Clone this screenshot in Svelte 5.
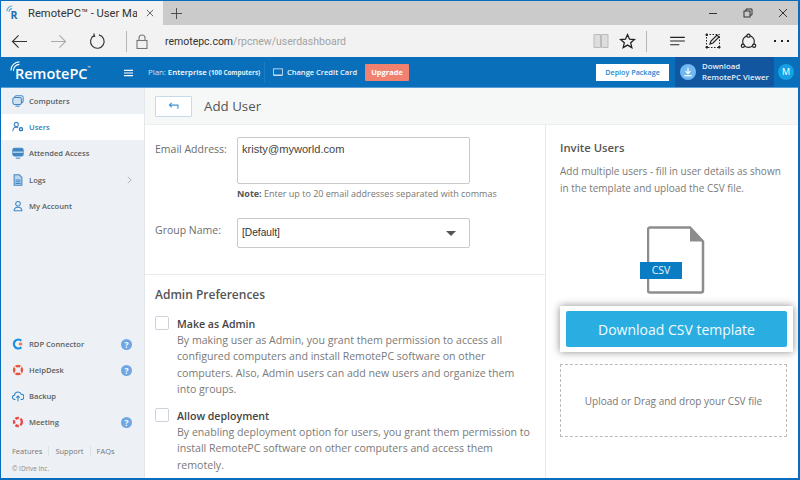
<script>
	const topNav = [
		{ label: 'Computers', icon: 'computers', tint: true },
		{ label: 'Users', icon: 'users', active: true },
		{ label: 'Attended Access', icon: 'attended' },
		{ label: 'Logs', icon: 'logs', more: true },
		{ label: 'My Account', icon: 'account' }
	];
	const bottomNav = [
		{ label: 'RDP Connector', icon: 'rdp', help: true },
		{ label: 'HelpDesk', icon: 'helpdesk', help: true },
		{ label: 'Backup', icon: 'backup' },
		{ label: 'Meeting', icon: 'meeting', help: true }
	];
	const footerLinks = ['Features', 'Support', 'FAQs'];
	const prefs = [
		{
			title: 'Make as Admin',
			text: 'By making user as Admin, you grant them permission to access all configured computers and install RemotePC software on other computers. Also, Admin users can add new users and organize them into groups.'
		},
		{
			title: 'Allow deployment',
			text: 'By enabling deployment option for users, you grant them permission to install RemotePC software on other computers and access them remotely.'
		}
	];
</script>

{#snippet navIcon(name)}
	<svg class="nav-icon" viewBox="0 0 14 14" fill="none" stroke="#3d86c6" stroke-width="1.2">
		{#if name === 'computers'}
			<rect x="3" y="1" width="10" height="8" rx="2" />
			<rect x="1" y="3" width="10" height="8" rx="2" fill="#cfe2f2" />
			<path d="M4 13h5" />
		{:else if name === 'users'}
			<circle cx="5" cy="4" r="2.4" />
			<path d="M1 12c0-3 2-4.6 4-4.6 1 0 1.600.2 2.200.7" />
			<circle cx="10.500" cy="9.500" r="1.800" stroke="#1f6fb5" stroke-width="1.500" />
		{:else if name === 'attended'}
			<rect x="1" y="1.500" width="12" height="9" rx="2" fill="#3d86c6" />
			<path d="M1 6h12" stroke="#edf1f5" />
			<path d="M4.500 13h5" />
		{:else if name === 'logs'}
			<path d="M2.500 1h6l3 3v9h-9z" fill="#bcd6ec" />
			<path d="M4 7h6M4 9h6M4 11h6" stroke="#3d86c6" />
		{:else if name === 'account'}
			<circle cx="7" cy="4.500" r="2.700" />
			<path d="M2.500 12.500c0-3 1.500-4 4.500-4s4.500 1 4.500 4z" />
		{:else if name === 'rdp'}
			<path d="M11 3.200A5.200 5.200 0 1 0 11 10.800" stroke="#1c8fe0" stroke-width="2.600" />
			<path d="M8 5.500h4v3H8z" fill="#ee7b4a" stroke="none" />
		{:else if name === 'helpdesk'}
			<circle cx="7" cy="7" r="4.600" stroke="#e8533f" stroke-width="2.800" />
			<path d="M3 3l2.500 2.500M11 3L8.500 5.500M3 11l2.500-2.500M11 11L8.500 8.500" stroke="#edf1f5" stroke-width="1.800" />
		{:else if name === 'backup'}
			<path d="M4 11H3.200a2.500 2.500 0 0 1-.3-5A4 4 0 0 1 10.700 5a3 3 0 0 1 .3 6h-1" stroke="#2a80c4" />
			<path d="M7 13V7M5 9l2-2 2 2" stroke="#2a80c4" />
		{:else if name === 'meeting'}
			<circle cx="7" cy="7" r="4.600" stroke="#ea4b4b" stroke-width="2.800" stroke-dasharray="4.200 1.800" />
		{/if}
	</svg>
{/snippet}

<div class="window">
	<div class="tabstrip">
		<div class="tab">
			<svg class="favicon" viewBox="0 0 16 18" fill="none">
				<path d="M1 7a6 6 0 0 1 6-6M3.500 7.500a3.500 3.500 0 0 1 3.500-3.500" stroke="#4aa8dc" stroke-width="1.300" />
				<text x="5" y="16" class="favicon-r">R</text>
			</svg>
			<span class="tab-title">RemotePC™ - User Man</span>
			<svg class="tab-x" viewBox="0 0 10 10" stroke="#444" stroke-width="1"><path d="M1 1l8 8M9 1l-8 8" /></svg>
		</div>
		<svg class="tab-plus" viewBox="0 0 12 12" stroke="#444" stroke-width="1"><path d="M6 0v12M0 6h12" /></svg>
		<div class="window-btns">
			<svg viewBox="0 0 10 10" stroke="#333" stroke-width="1" fill="none"><path d="M1 5.500h8" /></svg>
			<svg viewBox="0 0 10 10" stroke="#333" stroke-width="1" fill="none"><rect x="1" y="3" width="6" height="6" /><path d="M3 3V1h6v6H7" /></svg>
			<svg viewBox="0 0 10 10" stroke="#333" stroke-width="1" fill="none"><path d="M1 1l8 8M9 1l-8 8" /></svg>
		</div>
	</div>

	<div class="toolbar">
		<svg class="tb-nav" viewBox="0 0 18 16" fill="none" stroke="#333" stroke-width="1.200"><path d="M17 8H1.500M8 1.500L1.500 8 8 14.500" /></svg>
		<svg class="tb-nav fwd" viewBox="0 0 18 16" fill="none" stroke="#aaa" stroke-width="1.200"><path d="M1 8h15.500M10 1.500L16.500 8 10 14.500" /></svg>
		<svg class="tb-reload" viewBox="0 0 18 18" fill="none" stroke="#333" stroke-width="1.200"><path d="M5.500 2.600a7.200 7.200 0 1 0 5-.6" /><path d="M5 0.500l1 3-3 .5" /></svg>
		<i class="tb-sep"></i>
		<svg class="tb-lock" viewBox="0 0 12 15" fill="none" stroke="#777" stroke-width="1.100"><rect x="1" y="6.500" width="10" height="8" /><path d="M3 6.500V4a3 3 0 0 1 6 0v2.500" /></svg>
		<div class="url">remotepc.com<span>/rpcnew/userdashboard</span></div>
		<svg class="tb-book" viewBox="0 0 16 16" fill="#ddd" stroke="#bbb" stroke-width="1"><path d="M1 1.500h6.500v13H1zM8.500 1.500H15v13H8.500z" /></svg>
		<svg class="tb-star" viewBox="0 0 16 16" fill="none" stroke="#222" stroke-width="1.200"><path d="M8 1.500l1.900 4.300 4.600.4-3.500 3 1.100 4.600L8 11.400l-4.100 2.400L5 9.200 1.500 6.200l4.600-.4z" /></svg>
		<i class="tb-sep two"></i>
		<svg class="tb-hub" viewBox="0 0 18 12" stroke="#222" stroke-width="1.200"><path d="M1 1.500h16M1 5.500h16M1 9.500h10" /></svg>
		<svg class="tb-note" viewBox="0 0 16 16" fill="none" stroke="#222"><rect x="1.500" y="1.500" width="13" height="13" stroke-dasharray="1.500 1.500" /><path d="M5 11l1-3 6-6 2 2-6 6z" stroke-width="1.200" /><path d="M1 1h1.500v1.500H1zM13.500 13.500H15V15h-1.500zM1 13.500h1.500V15H1z" fill="#222" /></svg>
		<svg class="tb-share" viewBox="0 0 16 16" fill="none" stroke="#222" stroke-width="1.100"><circle cx="8" cy="8" r="5.500" /><circle cx="8" cy="2.500" r="1.500" fill="#f2f2f2" /><circle cx="2.700" cy="12" r="1.500" fill="#f2f2f2" /><circle cx="13.300" cy="12" r="1.500" fill="#f2f2f2" /></svg>
		<div class="tb-dots"><i></i><i></i><i></i></div>
	</div>

	<header class="appbar">
		<div class="logo">
			<svg class="logo-arcs" viewBox="0 0 14 14" fill="none" stroke="#fff" stroke-width="1.300"><path d="M1 11a10 10 0 0 1 10-10M4 11.500a7 7 0 0 1 7-7.500" /></svg>
			RemotePC<sup>™</sup>
		</div>
		<svg class="burger" viewBox="0 0 10 8" stroke="#fff" stroke-width="1.300"><path d="M0 1h10M0 4h10M0 7h10" /></svg>
		<div class="plan">Plan: <b>Enterprise</b> <small>(100 Computers)</small></div>
		<div class="card-link">
			<svg viewBox="0 0 11 9" fill="none" stroke="#d3e6f5" stroke-width="0.900"><rect x="0.500" y="0.500" width="10" height="7" /><path d="M1 7.500h9" stroke-width="1.300" /></svg>
			Change Credit Card
		</div>
		<button class="upgrade">Upgrade</button>
		<button class="deploy">Deploy Package</button>
		<div class="viewer">
			<span class="dl-circle">
				<svg viewBox="0 0 12 12" fill="none" stroke="#fff" stroke-width="1.500"><path d="M6 1v6.500M3 5l3 3 3-3" /><path d="M1.500 10.500h9" /></svg>
			</span>
			<div class="viewer-text">Download<br />RemotePC Viewer</div>
		</div>
		<div class="avatar-wrap"><span class="avatar">M</span></div>
	</header>

	<div class="body">
		<aside class="sidebar">
			<nav>
				{#each topNav as item}
					<div class="nav-item" class:active={item.active} class:tint={item.tint}>
						{@render navIcon(item.icon)}
						<span>{item.label}</span>
						{#if item.more}
							<svg class="chev" viewBox="0 0 6 10" fill="none" stroke="#9aa4ad" stroke-width="1"><path d="M1 1l4 4-4 4" /></svg>
						{/if}
					</div>
				{/each}
			</nav>
			<div class="side-bottom">
				{#each bottomNav as item}
					<div class="nav-item low">
						{@render navIcon(item.icon)}
						<span>{item.label}</span>
						{#if item.help}<em class="help">?</em>{/if}
					</div>
				{/each}
				<div class="links">
					{#each footerLinks as link}<span>{link}</span>{/each}
				</div>
				<div class="copy">© IDrive Inc.</div>
			</div>
		</aside>

		<main class="content">
			<div class="title-row">
				<button class="back" aria-label="Back">
					<svg viewBox="0 0 12 9" fill="none" stroke="#3f95d6" stroke-width="1.300"><path d="M11 7.500V3.500H1.500M4 1L1.500 3.500 4 6" /></svg>
				</button>
				<h1>Add User</h1>
			</div>
			<div class="panels">
				<section class="form-panel">
					<div class="form-top">
						<div class="field">
							<span class="label">Email Address:</span>
							<div>
								<div class="textarea">kristy@myworld.com</div>
								<p class="note"><b>Note:</b> Enter up to 20 email addresses separated with commas</p>
							</div>
						</div>
						<div class="field group">
							<span class="label">Group Name:</span>
							<div class="select">[Default]<i class="caret"></i></div>
						</div>
					</div>
					<div class="prefs">
						<h2>Admin Preferences</h2>
						{#each prefs as pref}
							<div class="pref">
								<i class="check"></i>
								<div>
									<h3>{pref.title}</h3>
									<p>{pref.text}</p>
								</div>
							</div>
						{/each}
					</div>
				</section>

				<section class="invite">
					<h2>Invite Users</h2>
					<p>Add multiple users - fill in user details as shown in the template and upload the CSV file.</p>
					<div class="csv-wrap">
						<svg class="csv-file" viewBox="0 0 58 68" fill="none" stroke="#8d8d8d" stroke-width="2.500">
							<path d="M3 1.500h40l13 14v49a2 2 0 0 1-2 2H3a2 2 0 0 1-2-2V3.500a2 2 0 0 1 2-2z" />
							<path d="M43 1.500l13 14H43z" fill="#8d8d8d" stroke="none" />
						</svg>
						<span class="csv-badge">CSV</span>
					</div>
					<div class="highlight">
						<button class="csv-btn">Download CSV template</button>
					</div>
					<div class="dropzone">Upload or Drag and drop your CSV file</div>
				</section>
			</div>
		</main>
	</div>
</div>

<style>
	:global(body) {
		margin: 0;
		background: #fff;
	}

	.window {
		box-sizing: border-box;
		width: 800px;
		height: 480px;
		overflow: hidden;
		border: solid #0a6cbd;
		border-width: 1px 2px 2px 1px;
		display: flex;
		flex-direction: column;
		font-family: 'Open Sans', sans-serif;
		color: #555;
	}

	.tabstrip {
		height: 24px;
		flex: none;
		display: flex;
		align-items: center;
		background: #cbcbcb;
	}

	.tab {
		width: 162px;
		height: 100%;
		flex: none;
		background: #f2f2f2;
		display: flex;
		align-items: center;
		position: relative;
	}

	.favicon {
		width: 14px;
		height: 16px;
		margin-left: 5px;
	}

	.favicon-r {
		font: bold 12px 'Open Sans', sans-serif;
		fill: #1f6fb5;
	}

	.tab-title {
		margin-left: 8px;
		width: 109px;
		overflow: hidden;
		white-space: nowrap;
		font-size: 11.200px;
		color: #333;
		font-family: Roboto, sans-serif;
	}

	.tab-x {
		width: 8px;
		height: 8px;
		margin-left: 9px;
	}

	.tab-plus {
		width: 11px;
		height: 11px;
		margin-left: 8px;
	}

	.window-btns {
		margin-left: auto;
		display: flex;
		gap: 25px;
		margin-right: 10px;
	}

	.window-btns svg {
		width: 10px;
		height: 10px;
	}

	.toolbar {
		height: 32px;
		flex: none;
		display: flex;
		align-items: center;
		background: #f2f2f2;
	}

	.tb-nav {
		width: 17px;
		height: 15px;
		margin-left: 10px;
	}

	.tb-nav.fwd {
		margin-left: 22px;
	}

	.tb-reload {
		width: 17px;
		height: 17px;
		margin-left: 22px;
	}

	.tb-sep {
		width: 1px;
		height: 21px;
		background: #b5b5b5;
		margin-left: 20px;
	}

	.tb-lock {
		width: 12px;
		height: 15px;
		margin-left: 9px;
	}

	.url {
		flex: 1;
		margin-left: 17px;
		font-size: 10.500px;
		color: #333;
		font-family: Roboto, sans-serif;
		white-space: nowrap;
	}

	.url span {
		color: #a2a2a2;
	}

	.tb-book {
		width: 16px;
		height: 16px;
	}

	.tb-star {
		width: 17px;
		height: 17px;
		margin-left: 10px;
	}

	.tb-sep.two {
		margin-left: 10px;
	}

	.tb-hub {
		width: 17px;
		height: 11px;
		margin-left: 22px;
	}

	.tb-note {
		width: 16px;
		height: 16px;
		margin-left: 19px;
	}

	.tb-share {
		width: 17px;
		height: 17px;
		margin-left: 19px;
	}

	.tb-dots {
		display: flex;
		gap: 4.500px;
		margin: 0 9px 0 17px;
	}

	.tb-dots i {
		width: 2px;
		height: 2px;
		background: #222;
	}

	.appbar {
		height: 31px;
		flex: none;
		display: flex;
		align-items: center;
		background: #0a6fbb;
		border-bottom: 1px solid #5a9fd6;
		box-sizing: border-box;
		color: #fff;
	}

	.logo {
		position: relative;
		width: 100px;
		margin-left: 14px;
		margin-right: 1px;
		padding-top: 2px;
		font-size: 14.500px;
		font-weight: 600;
		white-space: nowrap;
		box-sizing: border-box;
	}

	.logo sup {
		font-size: 4px;
		vertical-align: 10px;
		font-weight: 400;
	}

	.logo-arcs {
		position: absolute;
		left: -5px;
		top: -1px;
		width: 12px;
		height: 12px;
	}

	.burger {
		width: 9px;
		height: 8px;
		margin-left: 8px;
		margin-top: 1px;
	}

	.plan {
		margin-left: 15px;
		font-size: 7.800px;
		color: #cfe3f3;
		white-space: nowrap;
		padding-right: 5px;
		border-right: 1px solid #1a7cc4;
		line-height: 20px;
		width: 111px;
	}

	.plan b {
		font-weight: 600;
		color: #fff;
	}

	.plan small {
		font-size: 6.300px;
		font-weight: 700;
		color: #e4eff8;
	}

	.card-link {
		display: flex;
		align-items: center;
		gap: 4px;
		margin-left: 8px;
		font-size: 7.500px;
		font-weight: 600;
		white-space: nowrap;
		color: #eef6fc;
	}

	.card-link svg {
		width: 10px;
		height: 9px;
	}

	button {
		border: none;
		padding: 0;
		font-family: inherit;
	}

	.upgrade {
		margin-left: 8px;
		width: 44px;
		height: 17px;
		background: #f0816f;
		color: #fff;
		font-size: 7.500px;
		font-weight: 700;
		border-radius: 1px;
	}

	.deploy {
		margin-left: auto;
		width: 73px;
		height: 17px;
		background: #fff;
		color: #2a86cf;
		font-size: 7.200px;
		font-weight: 600;
	}

	.viewer {
		margin-left: 6px;
		width: 99px;
		height: 100%;
		background: #12569f;
		display: flex;
		align-items: center;
		gap: 6px;
		box-sizing: border-box;
		padding-left: 5px;
	}

	.dl-circle {
		width: 16px;
		height: 16px;
		border-radius: 50%;
		background: #6fb8f2;
		display: flex;
		align-items: center;
		justify-content: center;
		flex: none;
	}

	.dl-circle svg {
		width: 10px;
		height: 10px;
	}

	.viewer-text {
		font-size: 7.800px;
		font-weight: 600;
		line-height: 11px;
		white-space: nowrap;
		color: #e6f0f9;
	}

	.avatar-wrap {
		width: 24px;
		display: flex;
		justify-content: center;
	}

	.avatar {
		width: 16px;
		height: 16px;
		border-radius: 50%;
		background: #14a0e3;
		font-size: 9px;
		line-height: 16px;
		text-align: center;
	}

	.body {
		flex: 1;
		min-height: 0;
		display: flex;
	}

	.sidebar {
		width: 143px;
		flex: none;
		display: flex;
		flex-direction: column;
		justify-content: space-between;
		background: #edf1f5;
		border-right: 1px solid #e2e7eb;
		font-size: 7.600px;
		font-weight: 600;
		color: #5a5f63;
	}

	.nav-item {
		height: 26.500px;
		display: flex;
		align-items: center;
		padding-left: 11px;
		padding-right: 12px;
		position: relative;
	}

	.nav-item.tint {
		height: 25.500px;
	}

	.nav-item.active {
		background: #fff;
		color: #2d7fc2;
	}

	.nav-item span {
		margin-left: 5px;
	}

	.nav-item.low {
		height: 26px;
	}

	.nav-icon {
		width: 12px;
		height: 12px;
		flex: none;
	}

	.chev {
		width: 5px;
		height: 8px;
		margin-left: auto;
	}

	.help {
		margin-left: auto;
		width: 11px;
		height: 11px;
		border-radius: 50%;
		background: #6ea7e4;
		color: #fff;
		font-style: normal;
		font-size: 8.500px;
		font-weight: 700;
		line-height: 11px;
		text-align: center;
	}

	.links {
		display: flex;
		margin: 11px 0 0 11px;
		font-weight: 400;
		font-size: 7.500px;
		color: #777;
	}

	.links span + span {
		margin-left: 6px;
		padding-left: 6px;
		border-left: 1px solid #dde2e6;
	}

	.copy {
		margin: 8px 0 5px 11px;
		font-size: 6.500px;
		font-weight: 400;
		color: #8a8a8a;
	}

	.content {
		flex: 1;
		min-width: 0;
		display: flex;
		flex-direction: column;
	}

	.title-row {
		height: 37px;
		flex: none;
		box-sizing: border-box;
		display: flex;
		align-items: center;
		padding-left: 10px;
		background: #f6f8f8;
		border-bottom: 1px solid #eee;
	}

	.back {
		width: 37px;
		height: 21px;
		background: #fff;
		border: 1px solid #c5dbec;
		border-radius: 1px;
		display: flex;
		align-items: center;
		justify-content: center;
	}

	.back svg {
		width: 11px;
		height: 8px;
	}

	h1 {
		margin: 0 0 0 12px;
		font-size: 13.300px;
		font-weight: 400;
		color: #555;
	}

	.panels {
		flex: 1;
		min-height: 0;
		display: flex;
	}

	.form-panel {
		width: 401px;
		flex: none;
		box-sizing: border-box;
		border-right: 1px solid #e8e8e8;
		overflow: hidden;
	}

	.form-top {
		height: 150px;
		box-sizing: border-box;
		padding: 12px 0 0 10px;
		border-bottom: 1px solid #eaeaea;
	}

	.field {
		display: flex;
	}

	.field.group {
		margin-top: 18px;
		align-items: flex-start;
	}

	.label {
		width: 82px;
		flex: none;
		font-size: 10.500px;
		color: #6d6d6d;
		line-height: 25px;
	}

	.textarea,
	.select {
		box-sizing: border-box;
		width: 233px;
		background: #fff;
		border: 1px solid #c9c9c9;
		border-radius: 2px;
		font-family: 'Liberation Sans', sans-serif;
		color: #444;
	}

	.textarea {
		height: 47px;
		padding: 5px 4px;
		font-size: 11.100px;
	}

	.select {
		height: 30px;
		padding: 0 4px;
		font-size: 10.200px;
		line-height: 30px;
		color: #333;
		position: relative;
		display: flex;
		align-items: center;
		justify-content: space-between;
	}

	.caret {
		width: 0;
		height: 0;
		border: solid transparent;
		border-width: 5px 5px 0;
		border-top-color: #555;
		margin-right: 9px;
	}

	.note {
		margin: 4px 0 0;
		font-size: 9px;
		color: #777;
		line-height: 12px;
		white-space: nowrap;
	}

	.note b {
		font-weight: 700;
		color: #555;
	}

	.prefs {
		padding: 11px 10px 0;
	}

	.prefs h2,
	.invite h2 {
		margin: 0;
		font-size: 12px;
		font-weight: 600;
		color: #555;
		line-height: 18px;
	}

	.pref {
		display: flex;
		margin-top: 12px;
	}

	.pref + .pref {
		margin-top: 11px;
	}

	.check {
		width: 14px;
		height: 14px;
		flex: none;
		box-sizing: border-box;
		border: 1px solid #cdd3d8;
		border-radius: 2px;
		background: #fff;
		margin-right: 8px;
	}

	.pref h3 {
		margin: 0;
		font-size: 10.600px;
		font-weight: 600;
		line-height: 16px;
		color: #444;
	}

	.pref p {
		margin: 0;
		width: 358px;
		font-size: 10.600px;
		line-height: 16.300px;
		color: #7a7a7a;
	}

	.invite {
		flex: 1;
		min-width: 0;
		padding: 14px 5px 0 14px;
		position: relative;
	}

	.invite h2 {
		font-size: 11.300px;
	}

	.invite p {
		margin: 6px 0 0;
		width: 225px;
		font-size: 10px;
		line-height: 17px;
		color: #7a7a7a;
	}

	.csv-wrap {
		position: relative;
		width: 58px;
		height: 68px;
		margin: 29px 0 0 87px;
	}

	.csv-file {
		display: block;
		width: 58px;
		height: 68px;
	}

	.csv-badge {
		position: absolute;
		left: -7px;
		top: 36px;
		width: 42px;
		height: 17px;
		background: #0a7cc4;
		color: #e8f4fb;
		font-size: 10.500px;
		line-height: 17px;
		text-align: center;
	}

	.highlight {
		margin-top: 12px;
		padding: 5px 6px;
		width: 233px;
		box-sizing: border-box;
		background: #fff;
		box-shadow: 0 0 8px rgba(0, 0, 0, 0.45);
	}

	.csv-btn {
		display: block;
		width: 100%;
		height: 36px;
		background: #2aaee2;
		color: #f2fbff;
		font-size: 14px;
		border-radius: 2px;
	}

	.dropzone {
		margin-top: 12px;
		width: 227px;
		height: 73px;
		box-sizing: border-box;
		border: 1px dashed #bbb;
		display: flex;
		align-items: center;
		justify-content: center;
		font-size: 10px;
		color: #777;
	}
</style>
